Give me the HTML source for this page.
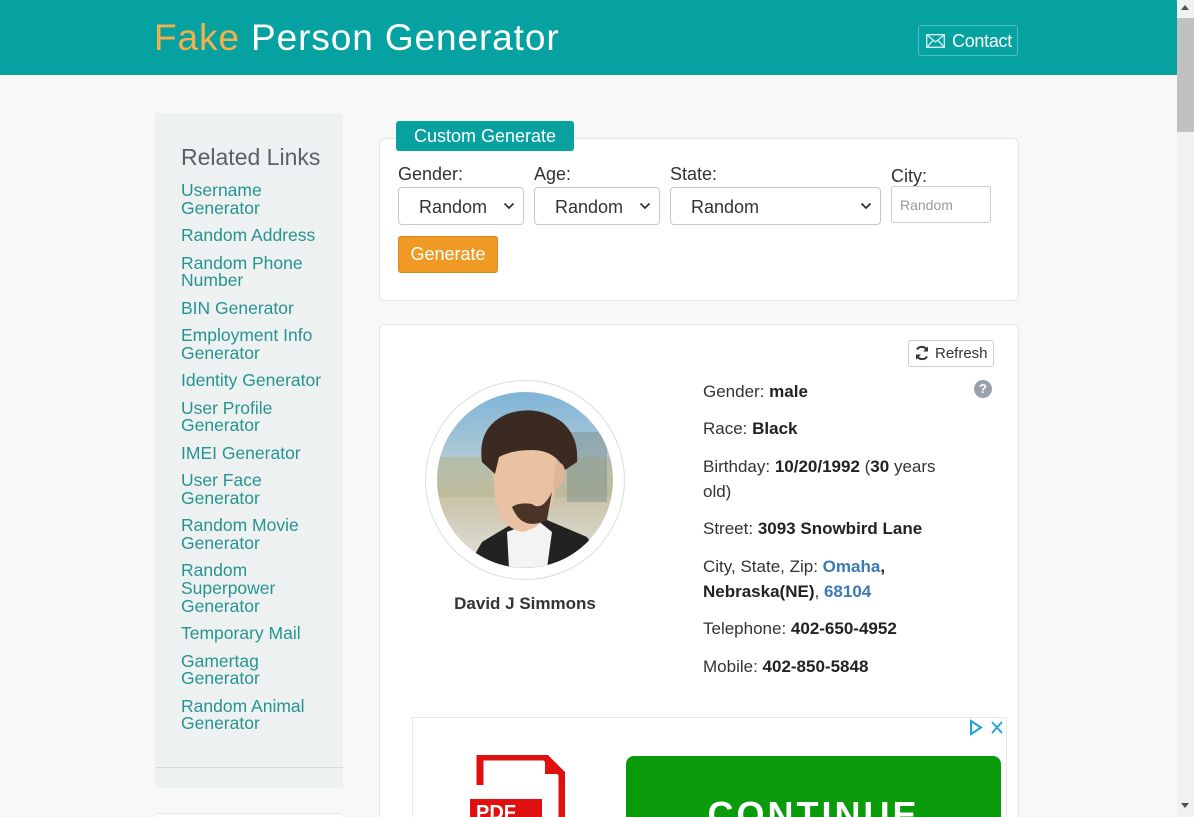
<!DOCTYPE html>
<html><head><meta charset="utf-8">
<style>
*{box-sizing:border-box;margin:0;padding:0}
html{overflow:hidden;width:1194px;height:817px}
body{width:1194px;height:817px;overflow:hidden;background:#f8f8f8;font-family:"Liberation Sans",Arial,sans-serif;position:relative;color:#333}
.abs{position:absolute}
.hdr{left:0;top:0;width:1177px;height:75px;background:#05a2a1}
.logo{left:154px;top:17px;font-size:37px;color:#fff;white-space:nowrap;letter-spacing:0.9px}
.logo b{font-weight:normal;color:#f5b04a}
.contact{left:918px;top:25px;width:100px;height:31px;border:1px solid #4fc1c0;border-radius:3px;color:#fff;font-size:18px;padding:5px 0 0 33px;letter-spacing:-0.3px}
.side{left:155px;top:113px;width:188px;height:675px;background:#eef1f1}
.side h3{position:absolute;left:26px;top:31px;font-size:23px;font-weight:normal;color:#5a6068}
.links{position:absolute;left:26px;top:69px;width:150px}
.links div{font-size:17.5px;line-height:17.6px;color:#26948f;margin-bottom:9.9px}
.sideline{left:155px;top:767px;width:188px;height:1px;background:#d6dada}
.card{background:#fff;border:1px solid #e6e6e6;border-radius:6px}
.tab{left:396px;top:121px;width:178px;height:30px;background:#09a1a0;border-radius:3px;color:#fff;font-size:18px;text-align:center;line-height:30px}
.lbl{font-size:18px;color:#333;top:164px}
.sel{top:187px;height:38px;border:1px solid #c8c8c8;border-radius:4px;background:#fff;font-size:18px;color:#333;padding:9px 0 0 20px}
.sel svg{position:absolute;right:8px;top:14px}
.gen{left:398px;top:236px;width:100px;height:37px;background:#ee9a25;border-radius:3px;border:1px solid #d88a1a;color:#fff;font-size:18px;text-align:center;line-height:34px}
.info{left:703px;font-size:17px;color:#333;line-height:25px}
.info b{color:#222}
.info a{color:#3a7ab5;font-weight:bold;text-decoration:none}
</style></head><body>
<div class="abs hdr"></div>
<div class="abs logo"><b>Fake</b> Person Generator</div>
<div class="abs contact">Contact</div>
<svg class="abs" style="left:926px;top:34px" width="19" height="14" viewBox="0 0 19 14"><rect x="0.7" y="0.7" width="17.6" height="12.6" fill="none" stroke="#d0eeee" stroke-width="1.4"/><path d="M1 1L9.5 8L18 1M1 13L7 6.5M18 13L12 6.5" fill="none" stroke="#d0eeee" stroke-width="1.3"/></svg>

<div class="abs" style="left:1177px;top:0;width:17px;height:817px;background:#f1f1f1"></div>
<div class="abs" style="left:1177px;top:18px;width:17px;height:114px;background:#c1c1c1"></div>
<div class="abs" style="left:1181px;top:5px;width:0;height:0;border-left:4px solid transparent;border-right:4px solid transparent;border-bottom:5px solid #505050"></div>
<div class="abs" style="left:1181px;top:803px;width:0;height:0;border-left:4px solid transparent;border-right:4px solid transparent;border-top:5px solid #505050"></div>

<div class="abs side">
<h3>Related Links</h3>
<div class="links">
<div>Username Generator</div>
<div>Random Address</div>
<div>Random Phone Number</div>
<div>BIN Generator</div>
<div>Employment Info Generator</div>
<div>Identity Generator</div>
<div>User Profile Generator</div>
<div>IMEI Generator</div>
<div>User Face Generator</div>
<div>Random Movie Generator</div>
<div>Random Superpower Generator</div>
<div>Temporary Mail</div>
<div>Gamertag Generator</div>
<div>Random Animal Generator</div>
</div></div>
<div class="abs sideline"></div>
<div class="abs card" style="left:155px;top:813px;width:188px;height:4px;border-radius:3px 3px 0 0;border-bottom:none"></div>

<div class="abs card" style="left:379px;top:138px;width:640px;height:163px"></div>
<div class="abs tab">Custom Generate</div>
<div class="abs lbl" style="left:398px">Gender:</div>
<div class="abs lbl" style="left:534px">Age:</div>
<div class="abs lbl" style="left:670px">State:</div>
<div class="abs lbl" style="left:891px;top:166px">City:</div>
<div class="abs sel" style="left:398px;width:126px">Random<svg width="12" height="8" viewBox="0 0 12 8"><path d="M1.5 1.5L6 6L10.5 1.5" fill="none" stroke="#333" stroke-width="1.8"/></svg></div>
<div class="abs sel" style="left:534px;width:126px">Random<svg width="12" height="8" viewBox="0 0 12 8"><path d="M1.5 1.5L6 6L10.5 1.5" fill="none" stroke="#333" stroke-width="1.8"/></svg></div>
<div class="abs sel" style="left:670px;width:211px">Random<svg width="12" height="8" viewBox="0 0 12 8"><path d="M1.5 1.5L6 6L10.5 1.5" fill="none" stroke="#333" stroke-width="1.8"/></svg></div>
<div class="abs" style="left:891px;top:186px;width:100px;height:37px;border:1px solid #ccc;border-radius:3px;background:#fff;font-size:14px;color:#999;padding:10px 0 0 8px">Random</div>
<div class="abs gen">Generate</div>

<div class="abs card" style="left:379px;top:324px;width:640px;height:500px;border-bottom:none;border-radius:6px 6px 0 0"></div>
<div class="abs" style="left:908px;top:340px;width:86px;height:27px;border:1px solid #ccc;border-radius:3px;background:#fff;font-size:15px;color:#333;padding:4px 0 0 26px">Refresh</div>
<svg class="abs" style="left:914px;top:345px" width="16" height="16" viewBox="0 0 16 16"><path d="M13 5.5A5.6 5.6 0 0 0 3 4.5M3 10.5A5.6 5.6 0 0 0 13 11.5" fill="none" stroke="#333" stroke-width="2"/><path d="M14 1.5V6.5H9Z M2 14.5V9.5H7Z" fill="#333"/></svg>
<div class="abs" style="left:974px;top:380px;width:18px;height:18px;border-radius:50%;background:#9aa1ad;color:#fff;font-weight:bold;font-size:13px;text-align:center;line-height:18px">?</div>

<div class="abs" style="left:425px;top:380px;width:200px;height:200px;border-radius:50%;border:1px solid #ddd;background:#fff"></div>
<svg class="abs" style="left:437px;top:392px" width="176" height="176" viewBox="0 0 176 176">
<defs><clipPath id="c"><circle cx="88" cy="88" r="88"/></clipPath>
<linearGradient id="sky" x1="0" y1="0" x2="0" y2="1"><stop offset="0" stop-color="#7fb4d8"/><stop offset=".45" stop-color="#b9cdd4"/><stop offset=".6" stop-color="#c9c2a8"/><stop offset="1" stop-color="#e4e4e0"/></linearGradient></defs>
<g clip-path="url(#c)">
<rect width="176" height="176" fill="url(#sky)"/>
<rect x="0" y="65" width="176" height="40" fill="#b7b48e" opacity=".6"/>
<rect x="130" y="40" width="40" height="70" fill="#7e8f8a" opacity=".5"/>
<path d="M30 176L45 150L75 132L110 128L150 145L170 176Z" fill="#222"/>
<path d="M70 140L100 128L115 140L110 176L72 176Z" fill="#f3f3f3"/>
<path d="M55 70Q55 40 85 38Q115 40 120 70L118 100Q112 135 85 140Q62 135 58 105Z" fill="#e9c2a4"/>
<path d="M75 115Q85 140 110 128L115 100Q105 120 95 112Q82 110 75 115Z" fill="#4a3428"/>
<path d="M45 70Q40 35 70 22Q100 12 125 30Q142 45 140 70L128 78Q118 58 95 58Q75 58 62 65L58 82Z" fill="#3a2a22"/>
<path d="M118 72Q128 68 128 82Q126 95 116 98Z" fill="#e0b598"/>
</g></svg>
<div class="abs" style="left:425px;top:594px;width:200px;text-align:center;font-size:17px;font-weight:bold;color:#333">David J Simmons</div>

<div class="abs info" style="top:379px">Gender: <b>male</b></div>
<div class="abs info" style="top:416px">Race: <b>Black</b></div>
<div class="abs info" style="top:454px;width:260px">Birthday: <b>10/20/1992</b> (<b>30</b> years old)</div>
<div class="abs info" style="top:516px">Street: <b>3093 Snowbird Lane</b></div>
<div class="abs info" style="top:554px;width:260px">City, State, Zip: <a>Omaha</a><b>,<br>Nebraska(NE)</b>, <a>68104</a></div>
<div class="abs info" style="top:616px">Telephone: <b>402-650-4952</b></div>
<div class="abs info" style="top:654px">Mobile: <b>402-850-5848</b></div>

<div class="abs" style="left:412px;top:717px;width:595px;height:100px;background:#fff;border:1px solid #e8e8e8;border-bottom:none"></div>
<svg class="abs" style="left:968px;top:719px" width="38" height="18" viewBox="0 0 38 18"><path d="M3 2L13 8.5L3 15Z" fill="none" stroke="#1aa3d8" stroke-width="2"/><path d="M24 3L34 14M34 3L24 14" stroke="#1aa3d8" stroke-width="1.8"/></svg>
<svg class="abs" style="left:470px;top:755px" width="95" height="62" viewBox="0 0 95 62"><path d="M10 30V2H75L92 19V62" fill="none" stroke="#e01010" stroke-width="7"/><path d="M75 2V19H92" fill="#e01010"/><rect x="0" y="44" width="72" height="20" fill="#e01010"/><text x="6" y="64" font-family="Liberation Sans" font-weight="bold" font-size="20" fill="#fff">PDF</text></svg>
<div class="abs" style="left:626px;top:756px;width:375px;height:61px;background:#0a9b0a;border-radius:8px 8px 0 0;overflow:hidden"><div style="margin-top:38px;text-align:center;color:#fff;font-weight:bold;font-size:36px;letter-spacing:3px">CONTINUE</div></div>
</body></html>
